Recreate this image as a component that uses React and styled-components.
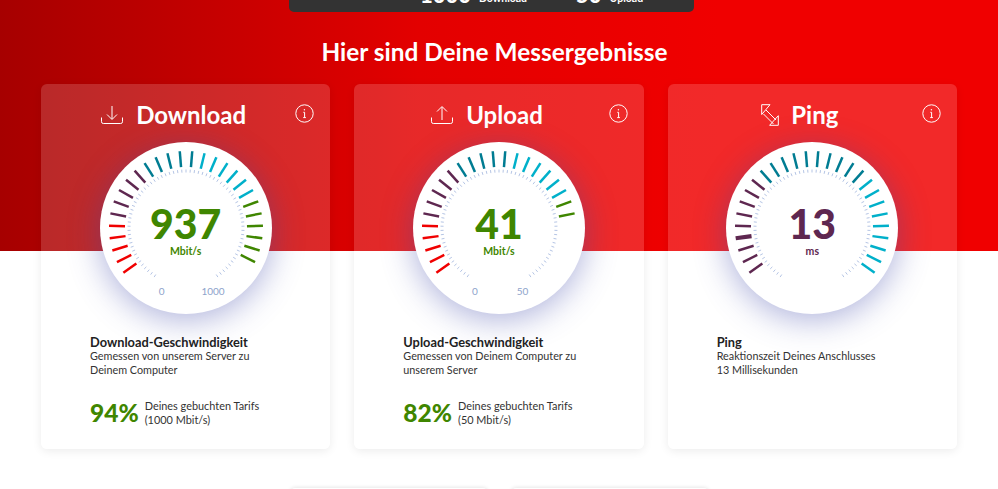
import styled, { createGlobalStyle } from "styled-components";

const GlobalStyle = createGlobalStyle`
  html, body {
    margin: 0;
    height: 489px;
    overflow: hidden;
    background: #fff;
    font-family: "Lato", "Noto Sans", sans-serif;
  }
`;

const RED_HEIGHT = 251;
const CARD_TOP = 84;

const Page = styled.div`
  height: 489px;
  overflow: hidden;
  background: linear-gradient(90deg, #a60000 0%, #e30000 42%, #f00000 72%, #f00000 100%) no-repeat;
  background-size: 100% ${RED_HEIGHT}px;
`;

const TopBar = styled.div`
  box-sizing: border-box;
  width: 405px;
  height: 12px;
  margin-left: 289px;
  padding: 0 0 9px 80px;
  background: #333;
  border-radius: 0 0 5px 5px;
  display: flex;
  justify-content: center;
  align-items: flex-end;
  gap: 49px;
  overflow: hidden;
  color: #fff;
`;

const TopStat = styled.div`
  display: flex;
  align-items: flex-end;
  gap: 8px;
  flex: none;
`;

const TopValue = styled.span`
  font-size: 22px;
  line-height: 17px;
  font-weight: 900;
`;

const TopLabel = styled.span`
  font-size: 10.5px;
  line-height: 10px;
  font-weight: 700;
`;

const Heading = styled.h1`
  margin: 25px 0 17px;
  padding-right: 9px;
  font-size: 24.4px;
  line-height: 30px;
  font-weight: 700;
  text-align: center;
  color: #fff;
`;

const Cards = styled.div`
  display: grid;
  grid-template-columns: repeat(3, 1fr);
  gap: 24px;
  padding: 0 41px;
`;

const Card = styled.section`
  position: relative;
  border-radius: 6px;
  padding: 16px 0 22px;
  background: linear-gradient(
    rgba(255, 255, 255, 0.16) ${RED_HEIGHT - CARD_TOP}px,
    #fff ${RED_HEIGHT - CARD_TOP}px
  );
  box-shadow: 0 2px 10px rgba(0, 0, 0, 0.08);
`;

const CardHeader = styled.div`
  display: flex;
  justify-content: center;
  align-items: center;
  gap: 12px;
  height: 30px;
  padding-right: 25px;
  color: #fff;
`;

const CardTitle = styled.h2`
  margin: 0;
  font-size: 24px;
  line-height: 30px;
  font-weight: 700;
`;

const InfoButton = styled.svg`
  position: absolute;
  top: 20px;
  right: 16px;
  width: 19px;
  height: 19px;
`;

const Gauge = styled.div`
  position: relative;
  width: 172px;
  height: 172px;
  margin: 12px auto 0;
  border-radius: 50%;
  background: #fff;
  box-shadow: 0 6px 32px rgba(62, 72, 170, 0.42);
`;

const GaugeFace = styled.svg`
  display: block;
  width: 172px;
  height: 172px;
`;

const Readout = styled.div`
  position: absolute;
  top: 61px;
  left: 0;
  right: 0;
  text-align: center;
  color: ${(props) => props.color};
`;

const ReadoutValue = styled.div`
  font-size: 41px;
  line-height: 42px;
  font-weight: 900;
`;

const ReadoutUnit = styled.div`
  font-size: 10.5px;
  line-height: 12px;
  font-weight: 700;
`;

const ScaleLabels = styled.div`
  position: absolute;
  top: 142px;
  left: 59px;
  display: flex;
  gap: ${(props) => props.gap}px;
  font-size: 10px;
  line-height: 14px;
  color: #8ea3cb;
`;

const Details = styled.div`
  margin: 21px 0 0 49px;
  font-size: 10.8px;
  line-height: 14px;
  color: #333;
`;

const DetailsTitle = styled.div`
  font-size: 12.8px;
  font-weight: 700;
  color: #222;
`;

const Share = styled.div`
  display: flex;
  align-items: center;
  gap: 6px;
  margin: 22px 0 0 49px;
  font-size: 10.9px;
  line-height: 14px;
  color: #333;
`;

const SharePercent = styled.div`
  font-size: 24.5px;
  line-height: 28px;
  font-weight: 900;
  color: #3f8600;
`;

const Buttons = styled.div`
  display: flex;
  justify-content: center;
  gap: 25px;
  margin-top: 39px;
`;

const GhostButton = styled.div`
  width: 196px;
  height: 40px;
  border-radius: 4px;
  background: #fff;
  box-shadow: 0 0 4px rgba(0, 0, 0, 0.14);
`;

const PLUM = "#5e2750";
const TEAL = "#007c92";
const CYAN = "#00b0ca";
const GREEN = "#3f8600";

const repeat = (color, count) => Array(count).fill(color);

const SPEED_COLORS = [
  ...repeat("#f00000", 5),
  ...repeat(PLUM, 5),
  ...repeat(TEAL, 5),
  ...repeat(CYAN, 6),
  ...repeat(GREEN, 7),
];

const PING_COLORS = [...repeat(PLUM, 9), ...repeat(TEAL, 10), ...repeat(CYAN, 9)];

const polar = (angle, radius) => {
  const rad = (angle * Math.PI) / 180;
  return [86 + radius * Math.sin(rad), 86 - radius * Math.cos(rad)];
};

const Tick = ({ angle, from, to, color, width }) => {
  const [x1, y1] = polar(angle, from);
  const [x2, y2] = polar(angle, to);
  return <line x1={x1} y1={y1} x2={x2} y2={y2} stroke={color} strokeWidth={width} />;
};

const GaugeTicks = ({ colors, lit, marker }) => {
  const minor = Array.from({ length: 71 }, (_, i) => -147 + i * 4.2);
  return (
    <GaugeFace viewBox="0 0 172 172">
      {minor.map((angle) => (
        <Tick key={angle} angle={angle} from={55.5} to={58.5} color="#b5c5e5" width={1} />
      ))}
      {colors.slice(0, lit).map((color, i) => (
        <Tick
          key={i}
          angle={-125.55 + i * 9.3}
          from={61}
          to={77}
          color={color}
          width={i === marker ? 4.2 : 2.5}
        />
      ))}
    </GaugeFace>
  );
};

const InfoIcon = () => (
  <InfoButton viewBox="0 0 19 19" fill="none" stroke="#fff">
    <circle cx="9.5" cy="9.5" r="8.7" strokeWidth="1" />
    <path d="M8.3 8.3h1.3v5.2M8.2 13.6h2.7" strokeWidth="1" />
    <circle cx="9.4" cy="5.7" r="0.7" fill="#fff" stroke="none" />
  </InfoButton>
);

const DownloadIcon = () => (
  <svg width="24" height="20" viewBox="0 0 24 20" fill="none" stroke="#fff" strokeWidth="1">
    <path d="M1.5 12.5v4.2a1.8 1.8 0 0 0 1.8 1.8h17.4a1.8 1.8 0 0 0 1.8-1.8v-4.2" />
    <path d="M12 1v13M7 9.5l5 5 5-5" />
  </svg>
);

const UploadIcon = () => (
  <svg width="24" height="20" viewBox="0 0 24 20" fill="none" stroke="#fff" strokeWidth="1">
    <path d="M1.5 12.5v4.2a1.8 1.8 0 0 0 1.8 1.8h17.4a1.8 1.8 0 0 0 1.8-1.8v-4.2" />
    <path d="M12 15V2M7 6.5l5-5 5 5" />
  </svg>
);

const PingIcon = () => (
  <svg width="18" height="22" viewBox="0 0 18 22" fill="none" stroke="#fff" strokeWidth="1">
    <path d="M0.7 0.7h8.3L0.7 10.5z" />
    <path d="M17.3 21.3H8.6l8.7-9.6z" />
    <path d="M5 6l10 10M2.5 10l10 10" />
  </svg>
);

const results = [
  {
    title: "Download",
    Icon: DownloadIcon,
    value: "937",
    unit: "Mbit/s",
    color: GREEN,
    colors: SPEED_COLORS,
    lit: 27,
    scaleMax: "1000",
    scaleGap: 37,
    heading: "Download-Geschwindigkeit",
    lines: ["Gemessen von unserem Server zu", "Deinem Computer"],
    percent: "94%",
    tariff: "(1000 Mbit/s)",
  },
  {
    title: "Upload",
    Icon: UploadIcon,
    value: "41",
    unit: "Mbit/s",
    color: GREEN,
    colors: SPEED_COLORS,
    lit: 23,
    scaleMax: "50",
    scaleGap: 39,
    heading: "Upload-Geschwindigkeit",
    lines: ["Gemessen von Deinem Computer zu", "unserem Server"],
    percent: "82%",
    tariff: "(50 Mbit/s)",
  },
  {
    title: "Ping",
    Icon: PingIcon,
    value: "13",
    unit: "ms",
    color: PLUM,
    colors: PING_COLORS,
    lit: 28,
    marker: 3,
    heading: "Ping",
    lines: ["Reaktionszeit Deines Anschlusses", "13 Millisekunden"],
  },
];

const ResultCard = ({ result }) => {
  const { Icon } = result;
  return (
    <Card>
      <CardHeader>
        <Icon />
        <CardTitle>{result.title}</CardTitle>
      </CardHeader>
      <InfoIcon />
      <Gauge>
        <GaugeTicks colors={result.colors} lit={result.lit} marker={result.marker} />
        <Readout color={result.color}>
          <ReadoutValue>{result.value}</ReadoutValue>
          <ReadoutUnit>{result.unit}</ReadoutUnit>
        </Readout>
        {result.scaleMax && (
          <ScaleLabels gap={result.scaleGap}>
            <span>0</span>
            <span>{result.scaleMax}</span>
          </ScaleLabels>
        )}
      </Gauge>
      <Details>
        <DetailsTitle>{result.heading}</DetailsTitle>
        {result.lines.map((line) => (
          <div key={line}>{line}</div>
        ))}
      </Details>
      {result.percent && (
        <Share>
          <SharePercent>{result.percent}</SharePercent>
          <div>
            Deines gebuchten Tarifs
            <br />
            {result.tariff}
          </div>
        </Share>
      )}
    </Card>
  );
};

const App = () => {
  return (
    <Page>
      <GlobalStyle />
      <TopBar>
        <TopStat>
          <TopValue>1000</TopValue>
          <TopLabel>Download</TopLabel>
        </TopStat>
        <TopStat>
          <TopValue>50</TopValue>
          <TopLabel>Upload</TopLabel>
        </TopStat>
      </TopBar>
      <Heading>Hier sind Deine Messergebnisse</Heading>
      <Cards>
        {results.map((result) => (
          <ResultCard key={result.title} result={result} />
        ))}
      </Cards>
      <Buttons>
        <GhostButton />
        <GhostButton />
      </Buttons>
    </Page>
  );
};

export default App;
